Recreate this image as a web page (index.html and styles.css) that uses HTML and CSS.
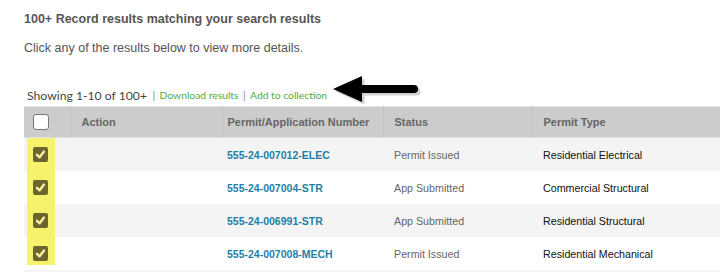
FILE: index.html
```html
<!DOCTYPE html>
<html lang="en">
<head>
  <meta charset="UTF-8" />
  <title>Search results</title>
  <link rel="stylesheet" href="styles.css">
</head>
<body>
  <div class="resultados">
    <h2 class="titulo">100+ Record results matching your search results</h2>
    <p class="ayuda">Click any of the results below to view more details.</p>

    <div class="barra">
      <span class="conteo">Showing 1-10 of 100+</span>
      <span class="sep">|</span>
      <a href="#">Download results</a>
      <span class="sep">|</span>
      <a href="#">Add to collection</a>
      <svg class="flecha" width="124" height="34" viewBox="0 0 124 34">
        <path d="M32 15 L61 2 L61 11 L113 11 Q117 11 117 15 Q117 19 113 19 L61 19 L61 28 Z" fill="#777" opacity="0.35" transform="translate(2.5,2.5)"/>
        <path d="M32 15 L61 2 L61 11 L113 11 Q117 11 117 15 Q117 19 113 19 L61 19 L61 28 Z" fill="#000"/>
      </svg>
    </div>

    <table class="tabla">
      <colgroup>
        <col style="width:46px">
        <col style="width:152px">
        <col style="width:161px">
        <col style="width:149px">
        <col>
      </colgroup>
      <thead>
        <tr>
          <th class="col-check"><span class="caja"></span></th>
          <th>Action</th>
          <th class="col-permiso">Permit/Application Number</th>
          <th>Status</th>
          <th>Permit Type</th>
        </tr>
      </thead>
      <tbody>
        <tr>
          <td class="col-check marcado"><span class="caja activa"><svg viewBox="0 0 15 15"><polyline points="4,7.8 6.6,10.3 11,4.6"/></svg></span></td>
          <td></td>
          <td class="col-permiso"><a href="#">555-24-007012-ELEC</a></td>
          <td class="estado">Permit Issued</td>
          <td>Residential Electrical</td>
        </tr>
        <tr>
          <td class="col-check marcado"><span class="caja activa"><svg viewBox="0 0 15 15"><polyline points="4,7.8 6.6,10.3 11,4.6"/></svg></span></td>
          <td></td>
          <td class="col-permiso"><a href="#">555-24-007004-STR</a></td>
          <td class="estado">App Submitted</td>
          <td>Commercial Structural</td>
        </tr>
        <tr>
          <td class="col-check marcado"><span class="caja activa"><svg viewBox="0 0 15 15"><polyline points="4,7.8 6.6,10.3 11,4.6"/></svg></span></td>
          <td></td>
          <td class="col-permiso"><a href="#">555-24-006991-STR</a></td>
          <td class="estado">App Submitted</td>
          <td>Residential Structural</td>
        </tr>
        <tr>
          <td class="col-check marcado ultimo"><span class="caja activa"><svg viewBox="0 0 15 15"><polyline points="4,7.8 6.6,10.3 11,4.6"/></svg></span></td>
          <td></td>
          <td class="col-permiso"><a href="#">555-24-007008-MECH</a></td>
          <td class="estado">Permit Issued</td>
          <td>Residential Mechanical</td>
        </tr>
        <tr>
          <td></td><td></td><td></td><td></td><td></td>
        </tr>
      </tbody>
    </table>
  </div>
</body>
</html>
```

FILE: styles.css
```css
body {
  margin: 0;
  padding: 0;
  background: white;
  font-family: "Liberation Sans", Arial, sans-serif;
  color: #555;
  overflow: hidden;
}

.resultados {
  padding: 11px 0 0 24px;
}

.titulo {
  margin: 0;
  font-size: 12.5px;
  font-weight: bold;
  color: #555;
  line-height: 16px;
}

.ayuda {
  margin: 13px 0 0;
  font-size: 12.5px;
  color: #555;
  line-height: 16px;
}

.barra {
  position: relative;
  display: flex;
  align-items: center;
  gap: 4.5px;
  margin-top: 28px;
  padding-left: 3px;
  height: 22px;
}

.conteo {
  font-family: Lato, sans-serif;
  font-size: 12.2px;
  color: #444;
  margin-right: 1px;
}

.sep {
  font-size: 10px;
  color: #888;
}

.barra a {
  font-family: Lato, sans-serif;
  font-size: 10.3px;
  color: #4cae4c;
  text-decoration: none;
}

.flecha {
  position: absolute;
  left: 277px;
  top: -10px;
}

.tabla {
  width: 720px;
  table-layout: fixed;
  border-collapse: collapse;
  font-size: 10.7px;
  border-top: 1px solid #e6e6e6;
}

.tabla th {
  background: #cccccc;
  color: #666;
  font-weight: bold;
  font-size: 11px;
  text-align: left;
  height: 30px;
  padding: 0 11px;
  white-space: nowrap;
  border-left: 1px solid #c3c3c3;
  border-bottom: 1px solid #e2e2e2;
}

.tabla th:first-child {
  border-left: none;
}

.tabla td {
  height: 33px;
  padding: 0 11px;
  color: #111;
  white-space: nowrap;
}

.tabla .col-permiso {
  padding-left: 5px;
}

.tabla tbody tr:nth-child(odd) td {
  background: #f4f4f4;
}

.tabla td a {
  color: #1f7fa6;
  font-weight: bold;
  font-size: 10.5px;
  text-decoration: none;
}

.tabla td.estado {
  color: #666;
}

.tabla .col-check {
  padding: 0;
}

.caja {
  display: inline-block;
  box-sizing: border-box;
  width: 16px;
  height: 16px;
  margin-left: 9px;
  border: 1.5px solid #777;
  border-radius: 3px;
  background: white;
  vertical-align: middle;
}

.tabla td.marcado {
  background: linear-gradient(to right, transparent 3px, #f7f26c 3px, #f7f26c 31px, transparent 31px);
}

.tabla tbody tr:nth-child(odd) td.marcado {
  background: linear-gradient(to right, #f4f4f4 3px, #f7f26c 3px, #f7f26c 31px, #f4f4f4 31px);
}

.tabla td.ultimo {
  background: linear-gradient(to right, transparent 3px, #f7f26c 3px, #f7f26c 31px, transparent 31px) top / 100% 28px no-repeat;
}

.caja.activa {
  border: none;
  background: #6b6530;
  width: 15px;
  height: 15px;
  border-radius: 2px;
}

.caja.activa svg {
  display: block;
  width: 15px;
  height: 15px;
}

.caja.activa polyline {
  fill: none;
  stroke: #f6f1a4;
  stroke-width: 2.4;
  stroke-linecap: round;
  stroke-linejoin: round;
}
```
